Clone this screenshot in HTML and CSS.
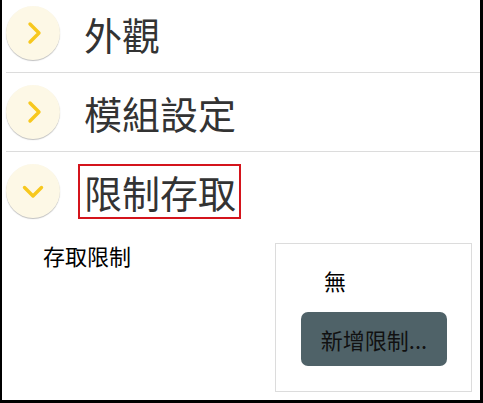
FILE: index.html
```html
<!DOCTYPE html>
<html lang="zh-Hant">
<head>
<meta charset="utf-8">
<link rel="stylesheet" href="styles.css">
</head>
<body>
<div class="frame">
  <div class="list">
    <div class="row">
      <span class="toggle">
        <svg viewBox="0 0 54 54" width="54" height="54"><path d="M24 18 L33 27 L24 36" /></svg>
      </span>
      <span class="title">外觀</span>
    </div>
    <div class="row">
      <span class="toggle">
        <svg viewBox="0 0 54 54" width="54" height="54"><path d="M24 18 L33 27 L24 36" /></svg>
      </span>
      <span class="title">模組設定</span>
    </div>
    <div class="row row-open">
      <span class="toggle">
        <svg viewBox="0 0 54 54" width="54" height="54"><path d="M18.5 23.5 L27 32 L35.5 23.5" /></svg>
      </span>
      <span class="title title-focus">限制存取</span>
    </div>
  </div>
  <div class="content">
    <div class="label">存取限制</div>
    <div class="panel">
      <div class="none">無</div>
      <button class="add">新增限制...</button>
    </div>
  </div>
</div>
</body>
</html>
```

FILE: styles.css
```css
html, body {
  margin: 0;
  padding: 0;
  background: #fff;
}
.frame {
  width: 483px;
  height: 403px;
  box-sizing: border-box;
  border-left: 2px solid #000;
  border-right: 3px solid #000;
  border-bottom: 3px solid #000;
  overflow: hidden;
  font-family: "Noto Sans CJK TC", "Noto Sans", sans-serif;
}
.list {
  margin-top: -6px;
  margin-left: 4px;
}
.row {
  height: 78px;
  display: flex;
  align-items: center;
  border-bottom: 1px solid #dcdcdc;
}
.row-open {
  border-bottom: none;
}
.toggle {
  width: 54px;
  height: 54px;
  border-radius: 50%;
  background: #fdf8e6;
  box-shadow: 0 1px 1px rgba(0,0,0,0.25);
  flex: none;
}
.toggle svg {
  display: block;
}
.toggle path {
  fill: none;
  stroke: #f7c81e;
  stroke-width: 3.4;
  stroke-linecap: round;
  stroke-linejoin: round;
}
.title {
  margin-left: 18px;
  font-size: 38px;
  line-height: 51px;
  color: #333;
  padding: 0 3px 0 4px;
  border: 2px solid transparent;
}
.title-focus {
  border-color: #d4141c;
}
.content {
  display: flex;
  justify-content: space-between;
  padding: 13px 8px 0 41px;
}
.label {
  font-size: 22px;
  line-height: 30px;
  color: #000;
  margin-top: -3px;
}
.panel {
  width: 197px;
  height: 149px;
  box-sizing: border-box;
  border: 1px solid #dcdcdc;
  display: flex;
  flex-direction: column;
  align-items: flex-start;
  padding: 21px 0 0 25px;
}
.none {
  font-size: 22px;
  line-height: 30px;
  color: #000;
  margin-left: 23px;
}
.add {
  margin-top: 17px;
  width: 146px;
  height: 54px;
  border: none;
  border-radius: 7px;
  background: #4f6268;
  color: #111;
  font-family: "Noto Sans CJK TC", "Noto Sans", sans-serif;
  font-size: 22px;
  padding: 0;
}
```
